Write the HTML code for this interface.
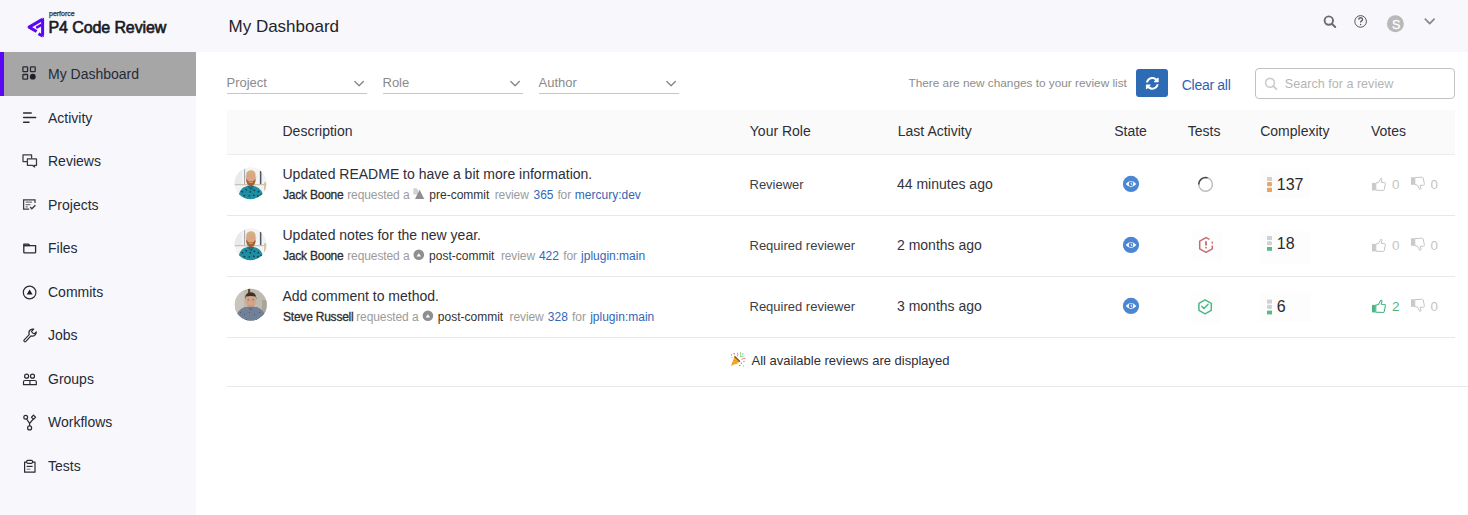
<!DOCTYPE html>
<html><head><meta charset="utf-8">
<style>
*{box-sizing:border-box;margin:0;padding:0}
html,body{width:1468px;height:515px;overflow:hidden;background:#fff}
body{position:relative;font-family:"Liberation Sans",sans-serif;color:#2b2b33}
.a{position:absolute;white-space:nowrap;line-height:1}
#ov{position:absolute;left:0;top:0;width:1468px;height:515px;overflow:visible}
#hdr{position:absolute;left:0;top:0;width:1468px;height:52px;background:#f8f8fc}
#side{position:absolute;left:0;top:52px;width:196px;height:463px;background:#f8f8fc}
#act{position:absolute;left:0;top:52px;width:196px;height:43.6px;background:#a6a6a6}
#actbar{position:absolute;left:0;top:52px;width:4px;height:43.6px;background:#5b06f5}
.nav{font-size:14px;color:#252a37;left:48px}
.th{font-size:14px;color:#2e2e36;top:124.3px}
.ttl{font-size:14px;color:#2e2e38}
.sub{font-size:12px}
.sub.b{color:#2e2e2e;font-weight:400;letter-spacing:-0.22px;-webkit-text-stroke:0.3px #2e2e2e}
.sub.g{color:#9b9b9b;letter-spacing:-0.1px}
.sub.d{color:#333}
.sub.l{color:#3466b8}
.role{font-size:13px;color:#3d3d45}
.time{font-size:14px;color:#34343c}
.line{position:absolute;height:1px;background:#e8e8e8}
.box{position:absolute;background:#fdfdfd}
</style></head><body>
<div id="hdr"></div>
<div id="side"></div>
<div id="act"></div>
<div id="actbar"></div>

<!-- logo text -->
<div class="a" style="left:49px;top:9.6px;font-size:7px;color:#2a2a2a;-webkit-text-stroke:0.25px #2a2a2a">perforce</div>
<div class="a" style="left:48.5px;top:20.1px;font-size:16px;font-weight:400;letter-spacing:-0.1px;-webkit-text-stroke:0.65px #1a1a22;color:#1a1a22">P4 Code Review</div>

<!-- header -->
<div class="a" style="left:228.5px;top:17.5px;font-size:17px;color:#23232b">My Dashboard</div>
<div class="a" style="left:1391.9px;top:18.5px;font-size:12.5px;color:#fff;z-index:3;-webkit-text-stroke:0.3px #fff">S</div>

<!-- nav -->
<div class="a nav" style="top:67.00px">My Dashboard</div>
<div class="a nav" style="top:110.54px">Activity</div>
<div class="a nav" style="top:154.08px">Reviews</div>
<div class="a nav" style="top:197.62px">Projects</div>
<div class="a nav" style="top:241.16px">Files</div>
<div class="a nav" style="top:284.70px">Commits</div>
<div class="a nav" style="top:328.24px">Jobs</div>
<div class="a nav" style="top:371.78px">Groups</div>
<div class="a nav" style="top:415.32px">Workflows</div>
<div class="a nav" style="top:458.86px">Tests</div>

<!-- filters -->
<div class="a" style="left:226.5px;top:76.1px;font-size:13px;color:#8b8b8b">Project</div>
<div class="a" style="left:382.5px;top:76.1px;font-size:13px;color:#8b8b8b">Role</div>
<div class="a" style="left:538.5px;top:76.1px;font-size:13px;color:#8b8b8b">Author</div>
<div class="line" style="left:227px;top:93px;width:140px;background:#c6c6c6"></div>
<div class="line" style="left:383px;top:93px;width:140px;background:#c6c6c6"></div>
<div class="line" style="left:539px;top:93px;width:140px;background:#c6c6c6"></div>

<div class="a" style="left:908.5px;top:78.1px;font-size:11.8px;color:#8d8d8d">There are new changes to your review list</div>
<div style="position:absolute;left:1136px;top:69px;width:32px;height:28px;border-radius:3px;background:#2e6bb5"></div>
<div class="a" style="left:1181.8px;top:77.9px;font-size:14px;letter-spacing:-0.3px;color:#2f62b5">Clear all</div>
<div style="position:absolute;left:1255px;top:68px;width:200px;height:31px;border:1px solid #c2c2c2;border-radius:4px"></div>
<div class="a" style="left:1284.8px;top:77.8px;font-size:12.6px;color:#b5b5b5">Search for a review</div>

<!-- table header -->
<div style="position:absolute;left:227px;top:110px;width:1228px;height:44px;background:#fafafa"></div>
<div class="line" style="left:227px;top:154px;width:1228px;background:#ececec"></div>
<div class="a th" style="left:282.5px">Description</div>
<div class="a th" style="left:749.8px">Your Role</div>
<div class="a th" style="left:897.8px">Last Activity</div>
<div class="a th" style="left:1114.2px">State</div>
<div class="a th" style="left:1187.8px">Tests</div>
<div class="a th" style="left:1260.2px">Complexity</div>
<div class="a th" style="left:1370.9px">Votes</div>

<!-- rows -->
<div class="line" style="left:227px;top:215px;width:1228px"></div>
<div class="line" style="left:227px;top:276px;width:1228px"></div>
<div class="line" style="left:227px;top:337px;width:1228px"></div>
<div class="line" style="left:227px;top:386px;width:1241px"></div>

<div class="box" style="left:1260px;top:169px;width:50px;height:29px"></div>
<div class="box" style="left:1260px;top:231px;width:51px;height:33px"></div>
<div class="box" style="left:1260px;top:292px;width:51px;height:30px"></div>
<div class="box" style="left:1192px;top:231px;width:30px;height:30px"></div>
<div class="box" style="left:1191px;top:293px;width:30px;height:30px"></div>

<div class="a ttl" style="left:282.5px;top:166.75px">Updated README to have a bit more information.</div>
<div class="a sub b" style="left:283px;top:188.5px">Jack Boone</div>
<div class="a sub g" style="left:347.2px;top:188.5px">requested a</div>
<div class="a sub d" style="left:429.3px;top:188.5px">pre-commit</div>
<div class="a sub g" style="left:494.7px;top:188.5px">review</div>
<div class="a sub l" style="left:533.5px;top:188.5px">365</div>
<div class="a sub g" style="left:557.4px;top:188.5px">for</div>
<div class="a sub l" style="left:574.8px;top:188.5px">mercury:dev</div>
<div class="a role" style="left:749.5px;top:177.8px">Reviewer</div>
<div class="a time" style="left:897px;top:176.95px">44 minutes ago</div>
<div class="a ttl" style="left:282.5px;top:227.75px">Updated notes for the new year.</div>
<div class="a sub b" style="left:283px;top:249.5px">Jack Boone</div>
<div class="a sub g" style="left:347.2px;top:249.5px">requested a</div>
<div class="a sub d" style="left:429.1px;top:249.5px">post-commit</div>
<div class="a sub g" style="left:500.9px;top:249.5px">review</div>
<div class="a sub l" style="left:538.9px;top:249.5px">422</div>
<div class="a sub g" style="left:563.3px;top:249.5px">for</div>
<div class="a sub l" style="left:581.1px;top:249.5px">jplugin:main</div>
<div class="a role" style="left:749.5px;top:238.8px">Required reviewer</div>
<div class="a time" style="left:897px;top:237.95px">2 months ago</div>
<div class="a ttl" style="left:282.5px;top:288.75px">Add comment to method.</div>
<div class="a sub b" style="left:283px;top:310.5px">Steve Russell</div>
<div class="a sub g" style="left:356.2px;top:310.5px">requested a</div>
<div class="a sub d" style="left:437.8px;top:310.5px">post-commit</div>
<div class="a sub g" style="left:509.6px;top:310.5px">review</div>
<div class="a sub l" style="left:547.8px;top:310.5px">328</div>
<div class="a sub g" style="left:572.1px;top:310.5px">for</div>
<div class="a sub l" style="left:590.2px;top:310.5px">jplugin:main</div>
<div class="a role" style="left:749.5px;top:299.8px">Required reviewer</div>
<div class="a time" style="left:897px;top:298.95px">3 months ago</div>

<div class="a" style="left:1276.8px;top:177.1px;font-size:16px;color:#2a2a30">137</div>
<div class="a" style="left:1276.8px;top:235.8px;font-size:16px;color:#2a2a30">18</div>
<div class="a" style="left:1276.8px;top:298.6px;font-size:16px;color:#2a2a30">6</div>

<div class="a" style="left:1392.1px;top:178.1px;font-size:13.4px;color:#c4c4c4">0</div>
<div class="a" style="left:1430.6px;top:178.1px;font-size:13.4px;color:#c4c4c4">0</div>
<div class="a" style="left:1392.1px;top:239.1px;font-size:13.4px;color:#c4c4c4">0</div>
<div class="a" style="left:1430.6px;top:239.1px;font-size:13.4px;color:#c4c4c4">0</div>
<div class="a" style="left:1392.1px;top:300.1px;font-size:13.4px;color:#4fb486">2</div>
<div class="a" style="left:1430.6px;top:300.1px;font-size:13.4px;color:#c4c4c4">0</div>

<div class="a" style="left:751.5px;top:353.9px;font-size:13px;color:#2e2e36">All available reviews are displayed</div>

<svg id="ov" viewBox="0 0 1468 515" width="1468" height="515">
 <defs>
  <clipPath id="cav1"><circle cx="250.6" cy="183.2" r="16"/></clipPath>
  <clipPath id="cav2"><circle cx="250.6" cy="244.2" r="16"/></clipPath>
  <clipPath id="cav3"><circle cx="250.8" cy="304.8" r="16"/></clipPath>
  <g id="thup">
    <rect x="0" y="5" width="3.5" height="7.5" fill="#c9c9c9"/>
    <path d="M3.8 5.2 L6.5 4.6 L8.6 0.6 Q9.6 0 10 1.2 L9.2 4.4 L12.6 4.6 Q13.8 5 13.3 6.2 L12.2 11.8 Q11.8 12.6 10.8 12.6 L3.8 12.2 Z" fill="#fff" stroke="#bdbdbd" stroke-width="0.9" stroke-linejoin="round"/>
  </g>
  <g id="thdn">
    <rect x="0" y="0" width="3.5" height="7.5" fill="#c9c9c9"/>
    <path d="M3.8 7.3 L6.5 7.9 L8.6 11.9 Q9.6 12.5 10 11.3 L9.2 8.1 L12.6 7.9 Q13.8 7.5 13.3 6.3 L12.2 0.7 Q11.8 -0.1 10.8 -0.1 L3.8 0.3 Z" fill="#fff" stroke="#bdbdbd" stroke-width="0.9" stroke-linejoin="round"/>
  </g>
  <g id="eye">
    <circle cx="0" cy="0" r="8.1" fill="#4a86d1"/>
    <path d="M-5.3 0 Q0 -6 5.3 0 Q0 6 -5.3 0 Z" fill="#fff"/>
    <circle cx="0" cy="0" r="2.3" fill="#4a86d1"/>
    <path d="M0.2 -1.2 L0.2 0.3 L1.3 0.9" stroke="#fff" stroke-width="0.9" fill="none"/>
  </g>
 </defs>

 <!-- logo mark -->
 <g stroke="#5b06f5" stroke-width="3" fill="none" stroke-linejoin="round" stroke-linecap="butt">
   <path d="M36.6 31.5 L29.1 27.1 L42.4 19.4"/>
   <path d="M42.6 18.9 V35.6"/>
   <path d="M38.5 33.7 L42.6 36"/>
   <path d="M36.2 27.9 L41.3 24.9" stroke-width="2.5"/>
 </g>
 <path d="M42.6 17.4 Q44.1 17.6 44.1 19 L42.6 19.4 Z M42.6 37.4 Q44.1 37.2 44.1 35.8 L42.6 35.6 Z" fill="#5b06f5"/>
 <!-- sidebar icons -->
 <g stroke="#2a2a32" stroke-width="1.3" fill="none">
   <rect x="22.9" y="66.9" width="4.7" height="4.7" rx="0.6"/>
   <rect x="30.5" y="66.9" width="4.7" height="4.7" rx="0.6"/>
   <rect x="22.9" y="74.5" width="4.7" height="4.7" rx="0.6"/>
 </g>
 <circle cx="32.8" cy="76.7" r="2.9" fill="#1e1e28"/>
 <g stroke="#2a2a32" stroke-width="1.5" fill="none" stroke-linecap="round">
   <path d="M23.6 112.9 H31.2"/><path d="M23.6 117.5 H35.6"/><path d="M23.6 122.3 H29"/>
 </g>
 <g stroke="#3a3a42" stroke-width="1.25" fill="none" stroke-linejoin="round">
   <path d="M27.2 161.5 H23 V154.9 H31.6 V158.6"/>
   <path d="M27.4 158.8 H36.5 V165.3 H34 L34.7 167 L32.2 165.3 H27.4 Z"/>
 </g>
 <g stroke="#3a3a42" stroke-width="1.25" fill="none">
   <path d="M29.2 209.2 H23.6 V199.8 H35 V203"/>
   <path d="M25.6 202.2 H32 M25.6 204.5 H30.5 M25.6 206.8 H27.8" stroke="#777"/>
   <path d="M30.2 207 L31.8 208.7 L35.4 205.2" stroke-width="1.4"/>
 </g>
 <g stroke="#2a2a32" stroke-width="1.3" fill="none" stroke-linejoin="round">
   <path d="M23.8 244.2 H28.6 L29.6 245.6 H35.6 V252.2 Q35.6 252.9 34.9 252.9 H24.5 Q23.8 252.9 23.8 252.2 Z"/>
   <path d="M23.8 245.6 H29.6" stroke-width="1.6"/>
 </g>
 <circle cx="29.6" cy="292.5" r="6.3" stroke="#2a2a32" stroke-width="1.2" fill="none"/>
 <path d="M26.7 294.6 L29.6 289.5 L32.6 294.6 Z" fill="#1e1e28"/>
 <g stroke="#2a2a32" stroke-width="1.2" fill="none" stroke-linejoin="round">
   <path d="M24.2 339.8 L29.2 334.6 Q28.2 331.5 30.5 329.8 Q32 328.8 33.7 329.2 L31.5 331.4 L32.6 333 L34.3 333.8 L36.3 331.8 Q36.5 334.4 34.6 335.6 Q33 336.5 31 335.9 L25.9 341.4 Q25 342.2 24.2 341.4 Q23.4 340.6 24.2 339.8 Z"/>
 </g>
 <g stroke="#2a2a32" stroke-width="1.2" fill="none">
   <circle cx="26.6" cy="376.2" r="2"/><circle cx="32.5" cy="376.2" r="2"/>
   <path d="M23.5 384.6 V381.8 Q23.5 380.5 25 380.5 H34.8 Q36.3 380.5 36.3 381.8 V384.6 Z"/>
   <path d="M29.9 380.5 V384.5"/>
 </g>
 <g stroke="#2a2a32" stroke-width="1.2" fill="none">
   <circle cx="25.7" cy="417.3" r="1.9"/>
   <path d="M33.5 415.2 L35.5 417.3 L33.5 419.4 L31.5 417.3 Z"/>
   <circle cx="29.6" cy="427.9" r="2"/>
   <path d="M26.6 419 L29.6 423.4 L33 419.3 M29.6 423.4 V425.9"/>
 </g>
 <g stroke="#2a2a32" stroke-width="1.2" fill="none" stroke-linejoin="round">
   <path d="M26.3 462.2 H24.6 V472.2 H35 V462.2 H33"/>
   <rect x="26.6" y="460.4" width="6" height="2.9" rx="1.2"/>
   <path d="M26.6 466.4 H32.6"/>
   <path d="M26.6 469.2 H30.4" stroke="#888"/>
 </g>

 <!-- header icons -->
 <circle cx="1328.8" cy="20.6" r="4.2" stroke="#6b6b6b" stroke-width="1.9" fill="none"/>
 <path d="M1331.8 23.7 L1335.2 27" stroke="#6b6b6b" stroke-width="2" stroke-linecap="round"/>
 <circle cx="1360.6" cy="21.4" r="5.8" stroke="#555" stroke-width="1" fill="none"/>
 <path d="M1358.7 19.6 Q1358.8 17.6 1360.7 17.6 Q1362.6 17.7 1362.6 19.4 Q1362.5 20.5 1361.3 21.1 Q1360.6 21.5 1360.6 22.6" stroke="#555" stroke-width="1.3" fill="none"/>
 <circle cx="1360.6" cy="24.6" r="0.75" fill="#555"/>
 <circle cx="1395.4" cy="23.8" r="8.5" fill="#b9b9b9"/>
 <path d="M1425.3 19.2 L1429.7 23.6 L1434.1 19.2" stroke="#8a8a8a" stroke-width="1.8" fill="none" stroke-linecap="round" stroke-linejoin="round"/>

 <!-- filter chevrons -->
 <g stroke="#888" stroke-width="1.4" fill="none" stroke-linecap="round" stroke-linejoin="round">
   <path d="M354.9 81.6 L359.1 85.8 L363.3 81.6"/>
   <path d="M510.9 81.6 L515.1 85.8 L519.3 81.6"/>
   <path d="M666.9 81.6 L671.1 85.8 L675.3 81.6"/>
 </g>

 <!-- refresh icon -->
 <path transform="translate(1145.7 76.8) scale(0.0258)" fill="#fff" d="M370.72 133.28C339.458 104.008 298.888 87.962 255.848 88c-77.458.068-144.328 53.178-162.791 126.85-1.344 5.363-6.122 9.15-11.651 9.15H24.103c-7.498 0-13.194-6.807-11.807-14.176C33.933 94.924 134.813 8 256 8c66.448 0 126.791 26.136 171.315 68.685L463.03 40.97C478.149 25.851 504 36.559 504 57.941V192c0 13.255-10.745 24-24 24H345.941c-21.382 0-32.090-25.851-16.971-40.971l41.750-41.749zM32 296h134.059c21.382 0 32.090 25.851 16.971 40.971l-41.750 41.750c31.262 29.273 71.835 45.319 114.876 45.280 77.418-.070 144.315-53.144 162.787-126.849 1.344-5.363 6.122-9.150 11.651-9.150h57.304c7.498 0 13.194 6.807 11.807 14.176C478.067 417.076 377.187 504 256 504c-66.448 0-126.791-26.136-171.315-68.685L48.970 471.030C33.851 486.149 8 475.441 8 454.059V320c0-13.255 10.745-24 24-24z"/>

 <!-- search box icon -->
 <circle cx="1270" cy="82.8" r="4.4" stroke="#cccccc" stroke-width="1.6" fill="none"/>
 <path d="M1273.2 86 L1276.4 89.2" stroke="#cccccc" stroke-width="1.8" stroke-linecap="round"/>

 <!-- avatars -->
 <g clip-path="url(#cav1)"><g transform="translate(250.6 183.2)">
   <rect x="-17" y="-17" width="34" height="34" fill="#f3f3f3"/>
   <rect x="-17" y="-17" width="8" height="18" fill="#e9eaec"/>
   <rect x="-6.6" y="-14" width="1.1" height="15" fill="#a7adb5"/>
   <rect x="9.3" y="-12.5" width="1.5" height="13.5" fill="#4b5462"/>
   <rect x="-17" y="1" width="34" height="1" fill="#c2b6a6"/>
   <rect x="13.5" y="-1" width="2" height="9" fill="#d8c2a0"/>
   <path d="M-12.5 17 Q-12 5 -5 3.2 L-1.5 2.6 H1.6 L5 3.2 Q12 5 13.5 17 Z" fill="#1f8ea2"/>
   <path d="M-9 8 l1.6 1 M-5 6 l1.2 1.2 M-1 9 l1.5 -0.6 M3 6.5 l1.4 1 M7 9 l1.5 -1 M-7 12 l1.5 0.8 M-2 13 l1.4 -0.5 M2.5 11.5 l1.4 1 M6.5 13 l1.4 -0.8 M10 11 l1 1.2 M-10.5 14.5 l1.2 0.6 M0.5 5 l1 1" stroke="#0e3a44" stroke-width="1.3"/>
   <path d="M-3.8 2.6 L0 7 L3.8 2.6 Z" fill="#1a6f80"/>
   <ellipse cx="0.3" cy="-5.6" rx="4.9" ry="6.3" fill="#d9a687"/>
   <path d="M-5 -5 Q-5.6 -12.6 0.4 -13 Q6.2 -12.6 5.6 -5 L4.8 -8.6 Q0.4 -10.4 -4.2 -8.6 Z" fill="#d3b07c"/>
   <path d="M-4.6 -4.6 Q-4.4 2.4 0.3 3.2 Q5 2.4 5.2 -4.6 Q3.6 -1.6 0.3 -1.8 Q-3 -1.6 -4.6 -4.6 Z" fill="#a5602e"/>
   <path d="M-1.8 -1 Q0.3 -0.2 2.4 -1" stroke="#e0b7a0" stroke-width="0.7" fill="none"/>
</g></g>
 <g clip-path="url(#cav2)"><g transform="translate(250.6 244.2)">
   <rect x="-17" y="-17" width="34" height="34" fill="#f3f3f3"/>
   <rect x="-17" y="-17" width="8" height="18" fill="#e9eaec"/>
   <rect x="-6.6" y="-14" width="1.1" height="15" fill="#a7adb5"/>
   <rect x="9.3" y="-12.5" width="1.5" height="13.5" fill="#4b5462"/>
   <rect x="-17" y="1" width="34" height="1" fill="#c2b6a6"/>
   <rect x="13.5" y="-1" width="2" height="9" fill="#d8c2a0"/>
   <path d="M-12.5 17 Q-12 5 -5 3.2 L-1.5 2.6 H1.6 L5 3.2 Q12 5 13.5 17 Z" fill="#1f8ea2"/>
   <path d="M-9 8 l1.6 1 M-5 6 l1.2 1.2 M-1 9 l1.5 -0.6 M3 6.5 l1.4 1 M7 9 l1.5 -1 M-7 12 l1.5 0.8 M-2 13 l1.4 -0.5 M2.5 11.5 l1.4 1 M6.5 13 l1.4 -0.8 M10 11 l1 1.2 M-10.5 14.5 l1.2 0.6 M0.5 5 l1 1" stroke="#0e3a44" stroke-width="1.3"/>
   <path d="M-3.8 2.6 L0 7 L3.8 2.6 Z" fill="#1a6f80"/>
   <ellipse cx="0.3" cy="-5.6" rx="4.9" ry="6.3" fill="#d9a687"/>
   <path d="M-5 -5 Q-5.6 -12.6 0.4 -13 Q6.2 -12.6 5.6 -5 L4.8 -8.6 Q0.4 -10.4 -4.2 -8.6 Z" fill="#d3b07c"/>
   <path d="M-4.6 -4.6 Q-4.4 2.4 0.3 3.2 Q5 2.4 5.2 -4.6 Q3.6 -1.6 0.3 -1.8 Q-3 -1.6 -4.6 -4.6 Z" fill="#a5602e"/>
   <path d="M-1.8 -1 Q0.3 -0.2 2.4 -1" stroke="#e0b7a0" stroke-width="0.7" fill="none"/>
</g></g>
 <g clip-path="url(#cav3)">
   <rect x="234" y="288" width="34" height="34" fill="#bfbab0"/>
   <rect x="234" y="288" width="10" height="34" fill="#c9c5bc"/>
   <rect x="248" y="288" width="2.2" height="7" fill="#6b4a2c"/>
   <rect x="262" y="300" width="6" height="22" fill="#aaa59a"/>
   <path d="M235 322 Q236 310 244.5 307 L257 307 Q265.5 310 267 322 Z" fill="#6f8097"/>
   <path d="M240 312 l1 1 M244 315 l1 -1 M249 312 l1 1 M254 315 l1 -1 M259 312 l1 1 M262 317 l1 -1 M246 319 l1 1 M256 319 l1 1" stroke="#4f5d70" stroke-width="1"/>
   <path d="M247.5 306 L250.8 311 L254 306 Z" fill="#5d6b7e"/>
   <ellipse cx="250.8" cy="300.8" rx="5.4" ry="6.6" fill="#d1a58c"/>
   <path d="M245.2 299.5 Q244.6 292.8 250.8 292.3 Q257 292.8 256.4 299.5 L255.6 296.6 Q250.8 295.3 246 296.6 Z" fill="#3b322b"/>
   <path d="M247.4 304.2 Q250.8 308.6 254.2 304.2 Q252.6 306.1 250.8 306.1 Q249 306.1 247.4 304.2 Z" fill="#8a6a56"/>
   <path d="M247.6 299.8 h1.6 M252.4 299.8 h1.6" stroke="#6d5448" stroke-width="0.8"/>
 </g>
 <!-- subline icons -->
 <path d="M413.3 188.2 H416.4 L418.2 190 V194.6 H413.3 Z" fill="#d2d2d2"/>
 <path d="M419.6 189.7 L424.3 198.9 H415 Z" fill="#8f8f8f"/>
 <circle cx="418.8" cy="254.8" r="5.3" fill="#8f8f8f"/>
 <path d="M416.6 256.4 L418.8 253.2 L421 256.4 Z" fill="#fff"/>
 <circle cx="427.9" cy="315.8" r="5.3" fill="#8f8f8f"/>
 <path d="M425.7 317.4 L427.9 314.2 L430.1 317.4 Z" fill="#fff"/>

 <!-- state eyes -->
 <use href="#eye" transform="translate(1131 183.9)"/>
 <use href="#eye" transform="translate(1131 244.9)"/>
 <use href="#eye" transform="translate(1131 305.9)"/>

 <!-- tests -->
 <circle cx="1205.6" cy="184.4" r="6.8" stroke="#bdbdbd" stroke-width="1.5" fill="none"/>
 <path d="M1198.8 184.4 A6.8 6.8 0 0 1 1207.6 177.9" stroke="#4a4a4a" stroke-width="1.5" fill="none"/>
 <g stroke="#c86b6d" stroke-width="1.5" fill="none" stroke-linejoin="round">
   <path d="M1209.5 239.4 L1206 237.6 L1199.7 241.2 V248.8 L1206 252.4 L1212.3 248.8 V245.6"/>
   <path d="M1212.3 243.6 V241.6"/>
 </g>
 <path d="M1206 241.2 V245.4" stroke="#c86b6d" stroke-width="1.8"/>
 <circle cx="1206" cy="247.6" r="0.9" fill="#c86b6d"/>
 <g stroke="#4cb886" stroke-width="1.5" fill="none" stroke-linejoin="round">
   <path d="M1205.1 299.8 L1211.3 303.3 V310.3 L1205.1 313.8 L1198.9 310.3 V303.3 Z"/>
   <path d="M1201.8 306.4 L1203.9 308.6 L1208.1 304.2" stroke-linecap="round"/>
 </g>

 <!-- complexity bars -->
 <rect x="1267" y="177" width="5" height="4" fill="#cfd2d0"/>
 <rect x="1267" y="182.1" width="5" height="4.1" rx="1.3" fill="#e8a56a"/>
 <rect x="1267" y="187.8" width="5" height="4.2" fill="#e8a56a"/>
 <rect x="1267" y="236" width="5" height="4" fill="#cfd2d0"/>
 <rect x="1267" y="241.2" width="5" height="4.1" rx="1.3" fill="#cfd2d0"/>
 <rect x="1267" y="247" width="5" height="3.8" fill="#55bb88"/>
 <rect x="1267" y="299.6" width="5" height="4" fill="#cfd2d0"/>
 <rect x="1267" y="304.8" width="5" height="4.1" rx="1.3" fill="#cfd2d0"/>
 <rect x="1267" y="310.6" width="5" height="3.8" fill="#55bb88"/>

 <!-- votes -->
 <use href="#thup" transform="translate(1372 177.9)"/>
 <use href="#thdn" transform="translate(1411 177.3)"/>
 <use href="#thup" transform="translate(1372 238.9)"/>
 <use href="#thdn" transform="translate(1411 238.3)"/>
 <g transform="translate(1372 299.9)">
   <rect x="0" y="5" width="3.5" height="7.5" fill="#4fb486"/>
   <path d="M3.8 5.2 L6.5 4.6 L8.6 0.6 Q9.6 0 10 1.2 L9.2 4.4 L12.6 4.6 Q13.8 5 13.3 6.2 L12.2 11.8 Q11.8 12.6 10.8 12.6 L3.8 12.2 Z" fill="#fff" stroke="#4fb486" stroke-width="1.1" stroke-linejoin="round"/>
 </g>
 <use href="#thdn" transform="translate(1411 299.3)"/>

 <!-- party popper -->
 <g transform="translate(730.5 351.5)">
   <path d="M0.3 14.8 L4.3 4.3 L10 9.8 Z" fill="#f4b42a"/>
   <path d="M4.3 4.3 L10 9.8 L8.8 10.4 L3.6 5.8 Z" fill="#9a5a14"/>
   <path d="M1.5 11.5 L6.8 12.2 M2.6 8.6 L8.4 10.7" stroke="#e08f17" stroke-width="0.8"/>
   <circle cx="3.7" cy="2.2" r="0.7" fill="#e24545"/>
   <circle cx="1" cy="3.4" r="0.7" fill="#3ebbe0"/>
   <path d="M6.8 1.2 Q8.2 3 6.6 4.8" stroke="#c85ee8" stroke-width="0.8" fill="none"/>
   <path d="M10 0.6 V4.2" stroke="#8cd04a" stroke-width="0.8"/>
   <circle cx="12.3" cy="2.5" r="0.7" fill="#3ebbe0"/>
   <path d="M9.5 5.2 L13 4.6" stroke="#6ac85a" stroke-width="0.8"/>
   <path d="M11 8 Q12.8 6.3 14.8 6.9" stroke="#ee5a6a" stroke-width="0.9" fill="none"/>
   <circle cx="13.4" cy="10" r="0.7" fill="#3ebbe0"/>
   <circle cx="10.8" cy="11.7" r="0.7" fill="#c85ee8"/>
   <circle cx="9.3" cy="14" r="0.7" fill="#ee5a6a"/>
   <circle cx="12.8" cy="14.4" r="0.6" fill="#8cd04a"/>
   <circle cx="1.5" cy="6" r="0.6" fill="#8cd04a"/>
 </g>
</svg>
</body></html>
